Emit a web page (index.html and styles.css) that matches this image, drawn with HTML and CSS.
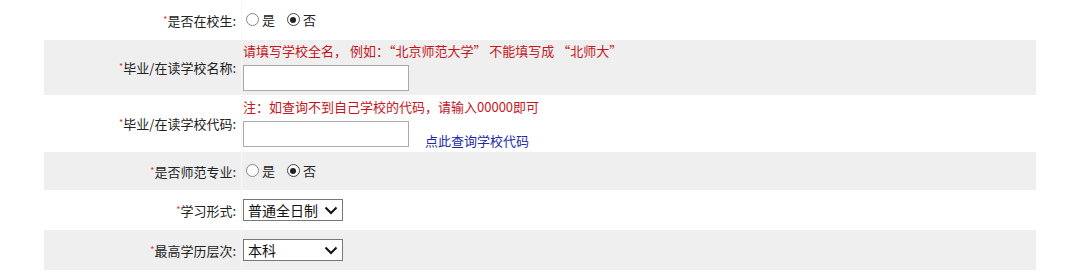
FILE: index.html
```html
<!DOCTYPE html>
<html lang="zh">
<head>
<meta charset="utf-8">
<link rel="stylesheet" href="styles.css">
</head>
<body>
<table class="form">
  <tr class="r1">
    <td class="lbl"><span class="req">*</span>是否在校生:</td>
    <td class="val">
      <label class="radio"><span class="dot"></span>是</label>
      <label class="radio"><span class="dot on"></span>否</label>
    </td>
  </tr>
  <tr class="r2 alt">
    <td class="lbl"><span class="req">*</span>毕业/在读学校名称:</td>
    <td class="val">
      <div class="hint">请填写学校全名， 例如：“北京师范大学” 不能填写成 “北师大”</div>
      <div class="inp"></div>
    </td>
  </tr>
  <tr class="r3">
    <td class="lbl"><span class="req">*</span>毕业/在读学校代码:</td>
    <td class="val">
      <div class="hint">注：如查询不到自己学校的代码，请输入00000即可</div>
      <div class="line"><div class="inp"></div><a class="link">点此查询学校代码</a></div>
    </td>
  </tr>
  <tr class="r4 alt">
    <td class="lbl"><span class="req">*</span>是否师范专业:</td>
    <td class="val">
      <label class="radio"><span class="dot"></span>是</label>
      <label class="radio"><span class="dot on"></span>否</label>
    </td>
  </tr>
  <tr class="r5">
    <td class="lbl"><span class="req">*</span>学习形式:</td>
    <td class="val">
      <div class="sel"><span>普通全日制</span><svg width="14" height="9" viewBox="0 0 14 9"><path d="M1.5 1.5 L7 7 L12.5 1.5" fill="none" stroke="#111" stroke-width="2"/></svg></div>
    </td>
  </tr>
  <tr class="r6 alt">
    <td class="lbl"><span class="req">*</span>最高学历层次:</td>
    <td class="val">
      <div class="sel"><span>本科</span><svg width="14" height="9" viewBox="0 0 14 9"><path d="M1.5 1.5 L7 7 L12.5 1.5" fill="none" stroke="#111" stroke-width="2"/></svg></div>
    </td>
  </tr>
</table>
</body>
</html>
```
FILE: styles.css
```css
html, body { margin: 0; padding: 0; background: #fff; }
body {
  font-family: "Noto Sans CJK SC", "Liberation Sans", sans-serif;
  font-size: 13px;
  color: #222;
}
.form {
  margin-left: 44px;
  width: 992px;
  border-collapse: collapse;
}
.form td { padding: 0; vertical-align: middle; }
.lbl {
  width: 192px;
  text-align: right;
  padding-right: 5px !important;
  white-space: nowrap;
  border-right: 1px solid #f7f7f7;
}
.val { padding-left: 1px !important; }
.alt td { background: #efefef; }
.r1 td { height: 40px; }
.r2 td { height: 55px; }
.r3 td { height: 57px; }
.r4 td { height: 38px; }
.r5 td { height: 40px; }
.r6 td { height: 40px; }
.req { color: #d33; font-size: 9px; vertical-align: 3px; }
.radio { display: inline-flex; align-items: center; margin-right: 6px; }
.dot {
  width: 13px; height: 13px; border: 1px solid #888; border-radius: 50%;
  background: #fff; margin: 0 3px 0 3px; position: relative; box-sizing: border-box;
}
.dot.on { border-color: #444; }
.dot.on::after {
  content: ""; position: absolute; left: 2.5px; top: 2.5px; width: 6px; height: 6px;
  border-radius: 50%; background: #222;
}
.hint { color: #c4161c; font-size: 13px; line-height: 18px; margin-top: -2px; }
.inp {
  width: 164px; height: 24px; border: 1px solid #aaa; background: #fff;
  margin-top: 5px;
}
.line { display: flex; align-items: flex-end; }
.link { color: #1c2aa8; margin-left: 16px; line-height: 16px; margin-bottom: -2px; }
.sel {
  height: 20px; border: 1px solid #777; background: #fff;
  display: flex; align-items: center; justify-content: space-between;
  padding: 0 4px 0 4px; box-sizing: content-box; width: 90px;
  font-size: 14px; color: #111;
}
```
